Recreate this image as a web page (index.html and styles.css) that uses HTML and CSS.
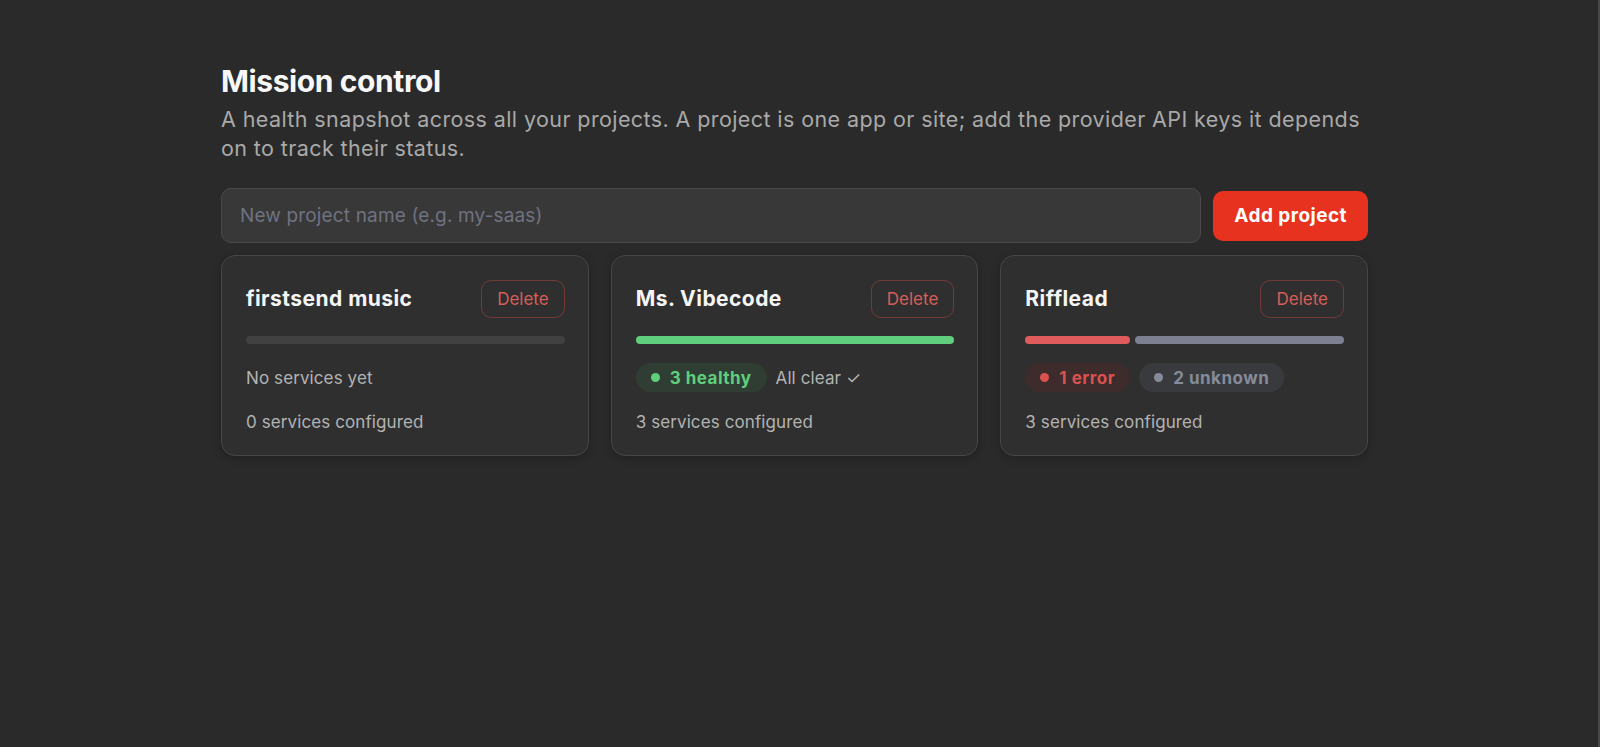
FILE: index.html
```html
<!DOCTYPE html>
<html lang="en">
<head>
<meta charset="utf-8">
<title>Mission control</title>
<link rel="stylesheet" href="styles.css">
</head>
<body>
<main class="page">
  <header class="intro">
    <h1 class="title">Mission control</h1>
    <p class="lead">A health snapshot across all your projects. A project is one app or site; add the provider API keys it depends on to track their status.</p>
  </header>

  <form class="new-project" onsubmit="return false">
    <input class="new-project__input" type="text" placeholder="New project name (e.g. my-saas)">
    <button class="btn-primary" type="submit">Add project</button>
  </form>

  <section class="projects">
    <article class="card">
      <div class="card__head">
        <h2 class="card__name">firstsend music</h2>
        <button class="btn-delete" type="button">Delete</button>
      </div>
      <div class="health-bar">
        <span class="health-bar__seg health-bar__seg--empty"></span>
      </div>
      <div class="status-row">
        <span class="status-note">No services yet</span>
      </div>
      <p class="card__meta">0 services configured</p>
    </article>

    <article class="card">
      <div class="card__head">
        <h2 class="card__name">Ms. Vibecode</h2>
        <button class="btn-delete" type="button">Delete</button>
      </div>
      <div class="health-bar">
        <span class="health-bar__seg health-bar__seg--ok" style="flex-grow:3"></span>
      </div>
      <div class="status-row">
        <span class="pill pill--ok"><span class="pill__dot"></span>3 healthy</span>
        <span class="status-note">All clear ✓</span>
      </div>
      <p class="card__meta">3 services configured</p>
    </article>

    <article class="card">
      <div class="card__head">
        <h2 class="card__name">Rifflead</h2>
        <button class="btn-delete" type="button">Delete</button>
      </div>
      <div class="health-bar">
        <span class="health-bar__seg health-bar__seg--error" style="flex-grow:1"></span>
        <span class="health-bar__seg health-bar__seg--unknown" style="flex-grow:2"></span>
      </div>
      <div class="status-row">
        <span class="pill pill--error"><span class="pill__dot"></span>1 error</span>
        <span class="pill pill--unknown"><span class="pill__dot"></span>2 unknown</span>
      </div>
      <p class="card__meta">3 services configured</p>
    </article>
  </section>
</main>
</body>
</html>
```

FILE: styles.css
```css
* {
  box-sizing: border-box;
}

html,
body {
  margin: 0;
  min-height: 100%;
  background: #2a2a2a;
}

body {
  min-height: 100vh;
  border-right: 2px solid #474747;
  font-family: Inter, "Noto Sans", "Liberation Sans", sans-serif;
  color: #f2f2f2;
}

.page {
  width: 1147px;
  margin-left: 221px;
  padding-top: 63px;
}

.title {
  margin: 0;
  font-size: 30px;
  line-height: 36px;
  font-weight: 700;
  letter-spacing: -0.4px;
  color: #f7f7f7;
}

.lead {
  margin: 6px 0 0;
  font-size: 21.5px;
  line-height: 29px;
  letter-spacing: 0.4px;
  color: #a9a9a9;
}

/* new project form */
.new-project {
  display: flex;
  align-items: center;
  gap: 12px;
  margin-top: 25px;
}

.new-project__input {
  flex: 1;
  height: 55px;
  padding: 0 18px;
  background: #383838;
  border: 1px solid #4a4a4a;
  border-radius: 10px;
  font: inherit;
  font-size: 19px;
  letter-spacing: 0.15px;
  color: #eee;
  outline: none;
}

.new-project__input::placeholder {
  color: #6f7280;
}

.btn-primary {
  height: 50px;
  padding: 0 21px;
  border: 0;
  border-radius: 10px;
  background: #e7321f;
  color: #fff;
  font: inherit;
  font-size: 19px;
  font-weight: 700;
  letter-spacing: 0.45px;
  cursor: pointer;
}

/* project cards */
.projects {
  display: grid;
  grid-template-columns: repeat(3, 1fr);
  gap: 22px;
  margin-top: 12px;
}

.card {
  display: flex;
  flex-direction: column;
  padding: 24px 23px 20px 24px;
  background: #2f2f2f;
  border: 1px solid #464646;
  border-radius: 14px;
  box-shadow: 0 2px 8px rgba(0, 0, 0, 0.25);
}

.card__head {
  display: flex;
  align-items: center;
  justify-content: space-between;
}

.card__name {
  margin: 0;
  font-size: 21px;
  line-height: 28px;
  font-weight: 700;
  letter-spacing: 0.45px;
  color: #f5f5f5;
}

.btn-delete {
  height: 38px;
  padding: 0 15px;
  background: transparent;
  border: 1px solid #723b38;
  border-radius: 10px;
  color: #d65e59;
  font: inherit;
  font-size: 17px;
  cursor: pointer;
}

.health-bar {
  display: flex;
  gap: 5px;
  height: 8px;
  margin-top: 18px;
}

.health-bar__seg {
  flex: 1 1 0;
  border-radius: 4px;
}

.health-bar__seg--empty {
  background: #414141;
}

.health-bar__seg--ok {
  background: #5fcf7d;
}

.health-bar__seg--error {
  background: #e05b5b;
}

.health-bar__seg--unknown {
  background: #7c8090;
}

.status-row {
  display: flex;
  align-items: center;
  gap: 9px;
  min-height: 29px;
  margin-top: 19px;
}

.status-note {
  font-size: 17px;
  letter-spacing: 0.1px;
  color: #b3b3b3;
}

.pill {
  display: inline-flex;
  align-items: center;
  gap: 10px;
  height: 29px;
  padding: 0 15px;
  border-radius: 999px;
  font-size: 17px;
  font-weight: 700;
  letter-spacing: 0.5px;
}

.pill__dot {
  width: 9px;
  height: 9px;
  border-radius: 50%;
  background: currentColor;
}

.pill--ok {
  background: #2f3d33;
  color: #5fcf7d;
}

.pill--error {
  background: #3e2b2b;
  color: #d9524f;
}

.pill--unknown {
  background: #383a3e;
  color: #868b99;
}

.card__meta {
  margin: 18px 0 0;
  font-size: 17px;
  line-height: 25px;
  letter-spacing: 0.1px;
  color: #b3b3b3;
}
```
